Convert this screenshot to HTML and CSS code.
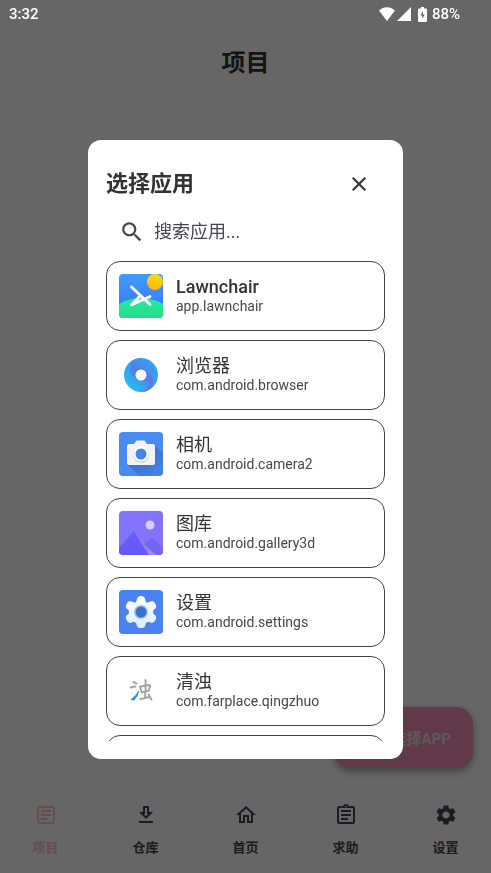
FILE: index.html
```html
<!DOCTYPE html>
<html lang="zh-CN">
<head>
<meta charset="utf-8">
<meta name="viewport" content="width=device-width, initial-scale=1">
<title>项目</title>
<link rel="stylesheet" href="styles.css">
</head>
<body>
<div class="page">
  <header class="topbar"><h1>项目</h1></header>
  <main class="content">
    <button class="fab" type="button">选择APP</button>
  </main>
  <nav class="tabs">
    <a class="tab active" href="#projects">
      <svg viewBox="0 0 24 24"><path d="M19 5v14H5V5h14m0-2H5c-1.1 0-2 .9-2 2v14c0 1.1.9 2 2 2h14c1.1 0 2-.9 2-2V5c0-1.1-.9-2-2-2zM14 17H7v-2h7v2zm3-4H7v-2h10v2zm0-4H7V7h10v2z"/></svg>
      <span>项目</span>
    </a>
    <a class="tab" href="#store">
      <svg viewBox="0 0 24 24"><path d="M19 9h-4V3H9v6H5l7 7 7-7zm-8 2V5h2v6h1.17L12 13.170 9.830 11H11zm-6 7h14v2H5z"/></svg>
      <span>仓库</span>
    </a>
    <a class="tab" href="#home">
      <svg viewBox="0 0 24 24"><path d="M12 5.690l5 4.500V18h-2v-6H9v6H7v-7.810l5-4.500M12 3L2 12h3v8h6v-6h2v6h6v-8h3L12 3z"/></svg>
      <span>首页</span>
    </a>
    <a class="tab" href="#help">
      <svg viewBox="0 0 24 24"><path d="M7 15h7v2H7zm0-4h10v2H7zm0-4h10v2H7zm12-4h-4.180C14.400 1.840 13.300 1 12 1c-1.300 0-2.400.84-2.820 2H5c-1.100 0-2 .9-2 2v14c0 1.100.9 2 2 2h14c1.100 0 2-.9 2-2V5c0-1.100-.9-2-2-2zm-7-.25c.41 0 .75.34.75.75s-.34.75-.75.75-.75-.34-.75-.75.34-.75.75-.75zM19 19H5V5h14v14z"/></svg>
      <span>求助</span>
    </a>
    <a class="tab" href="#settings">
      <svg viewBox="0 0 24 24"><path d="M19.140 12.940c.04-.3.06-.61.06-.94s-.02-.64-.07-.94l2.030-1.580c.18-.14.23-.41.12-.61l-1.920-3.320c-.12-.22-.37-.29-.59-.22l-2.390.96c-.5-.38-1.030-.7-1.620-.94l-.36-2.540c-.04-.24-.24-.41-.48-.41h-3.840c-.24 0-.43.17-.47.41l-.36 2.540c-.59.24-1.130.57-1.620.94l-2.390-.96c-.22-.08-.47 0-.59.22L2.740 8.870c-.12.21-.08.47.12.61l2.030 1.580c-.05.3-.09.63-.09.94s.02.64.07.94l-2.030 1.580c-.18.14-.23.41-.12.61l1.920 3.320c.12.22.37.29.59.22l2.390-.96c.5.38 1.030.7 1.620.94l.36 2.540c.05.24.24.41.48.41h3.840c.24 0 .44-.17.47-.41l.36-2.540c.59-.24 1.130-.56 1.620-.94l2.390.96c.22.08.47 0 .59-.22l1.920-3.320c.12-.22.07-.47-.12-.61l-2.010-1.580zM12 15.600c-1.980 0-3.600-1.620-3.600-3.600s1.620-3.600 3.600-3.600 3.600 1.620 3.600 3.600-1.620 3.600-3.600 3.600z"/></svg>
      <span>设置</span>
    </a>
  </nav>
</div>

<div class="scrim">
  <div class="status">
    <span>3:32</span>
    <div class="status-icons">
      <svg class="wifi" viewBox="0 0 16 14"><path d="M0 3.500C4.500-1 11.500-1 16 3.500L8 14z"/></svg>
      <svg class="signal" viewBox="0 0 14 14"><path d="M14 0v14H0z"/></svg>
      <svg class="battery" viewBox="0 0 9 15"><path fill-rule="evenodd" d="M3 0h3v1.500h2q1 0 1 1V14q0 1-1 1H1q-1 0-1-1V2.500q0-1 1-1h2zM5 4L2.500 8.500h1.700v3.500l2.500-4.500H5z"/></svg>
      <span>88%</span>
    </div>
  </div>

  <section class="dialog" role="dialog" aria-modal="true" aria-labelledby="dialog-title">
    <div class="dialog-head">
      <h2 id="dialog-title">选择应用</h2>
      <button class="close" type="button" aria-label="关闭">
        <svg viewBox="0 0 24 24"><path d="M19 6.410L17.590 5 12 10.590 6.410 5 5 6.410 10.590 12 5 17.590 6.410 19 12 13.410 17.590 19 19 17.590 13.410 12z"/></svg>
      </button>
    </div>
    <label class="search">
      <svg viewBox="0 0 24 24"><path d="M15.500 14h-.79l-.28-.27C15.410 12.590 16 11.110 16 9.500 16 5.910 13.090 3 9.500 3S3 5.910 3 9.500 5.910 16 9.500 16c1.610 0 3.090-.59 4.230-1.570l.27.28v.79l5 4.990L20.490 19l-4.990-5zm-6 0C7.010 14 5 11.990 5 9.500S7.010 5 9.500 5 14 7.010 14 9.500 11.990 14 9.500 14z"/></svg>
      <input type="text" placeholder="搜索应用..." aria-label="搜索应用">
    </label>
    <ul class="apps">
      <li><button class="app" type="button">
        <svg class="app-icon" viewBox="0 0 44 44">
          <defs>
            <linearGradient id="sky" x2="0" y2="1"><stop stop-color="#429bfb"/><stop offset="1" stop-color="#3472fa"/></linearGradient>
            <linearGradient id="lawn" x2="0" y2="1"><stop stop-color="#25e9a4"/><stop offset="1" stop-color="#27d060"/></linearGradient>
            <linearGradient id="sun" x2="0" y2="1"><stop stop-color="#ffdd0c"/><stop offset="1" stop-color="#ffb40b"/></linearGradient>
            <clipPath id="tile"><rect width="44" height="44" rx="4"/></clipPath>
          </defs>
          <g clip-path="url(#tile)">
            <rect width="44" height="44" fill="url(#sky)"/>
            <ellipse cx="22" cy="46" rx="32" ry="22" fill="url(#lawn)"/>
            <circle cx="36" cy="8" r="8" fill="url(#sun)"/>
            <g fill="none" stroke="#fff" stroke-width="2.800" stroke-linecap="round" stroke-linejoin="round"><path d="M12.500 13L31 30.500M21 22L12.500 31L31 22.500"/></g>
          </g>
        </svg>
        <span class="app-text"><span class="name latin">Lawnchair</span><span class="pkg">app.lawnchair</span></span>
      </button></li>
      <li><button class="app" type="button">
        <svg class="app-icon" viewBox="0 0 44 44">
          <defs>
            <linearGradient id="ring" x1="0" y1="1" x2="1" y2="0"><stop stop-color="#22c8fa"/><stop offset=".5" stop-color="#3b97ea"/><stop offset="1" stop-color="#23b9f4"/></linearGradient>
            <linearGradient id="swirl" x2="1" y2="1"><stop stop-color="#4c83e6"/><stop offset="1" stop-color="#6275ea"/></linearGradient>
            <linearGradient id="flow" y1="1" x2="1" y2="0"><stop stop-color="#5f78ea"/><stop offset="1" stop-color="#2fa5f0"/></linearGradient>
          </defs>
          <circle cx="22" cy="22" r="17" fill="url(#ring)"/>
          <path d="M14.500 7C9 14 11 22 16.500 25.500c4 3 9 1 12.500 3.500 2 3-1 8-7 10 6 0 11-3 12-9 1-6-3-10-6-12-4-4-11-2-13.500-11z" fill="url(#swirl)"/>
          <path d="M14.500 7c8-4 17 0 20 7 2 4 0 5-2 6-5-4-8-3-12-4-4-2-6-5-6-9z" fill="url(#flow)"/>
          <circle cx="22" cy="22" r="5.500" fill="#fff"/>
        </svg>
        <span class="app-text"><span class="name">浏览器</span><span class="pkg">com.android.browser</span></span>
      </button></li>
      <li><button class="app" type="button">
        <svg class="app-icon" viewBox="0 0 44 44">
          <defs><linearGradient id="shade" x1=".3" y1=".3" x2="1" y2="1"><stop stop-color="#3565b6"/><stop offset="1" stop-color="#4384e8"/></linearGradient></defs>
          <rect width="44" height="44" rx="4" fill="#4a8af4"/>
          <path d="M35 13l9 8v19q0 4-4 4H20L8 32z" fill="url(#shade)" opacity=".7"/>
          <path d="M10 12h5l2.500-3.500h8L28 12h6q2 0 2 2v17q0 2-2 2H10q-2 0-2-2V14q0-2 2-2z" fill="#f3f3f3"/>
          <circle cx="22" cy="23" r="8" fill="#d8d8d8"/><circle cx="22" cy="22" r="7.500" fill="#fff"/><circle cx="22" cy="22" r="5.500" fill="#4384ee"/>
        </svg>
        <span class="app-text"><span class="name">相机</span><span class="pkg">com.android.camera2</span></span>
      </button></li>
      <li><button class="app" type="button">
        <svg class="app-icon" viewBox="0 0 44 44">
          <defs>
            <linearGradient id="hill" x2="0" y2="1"><stop stop-color="#6b5cfb"/><stop offset="1" stop-color="#6359fc"/></linearGradient>
            <linearGradient id="ray" x2="1" y2="1"><stop stop-color="#9a78d0"/><stop offset="1" stop-color="#9c86f6"/></linearGradient>
          </defs>
          <rect width="44" height="44" rx="4" fill="#8373fb"/>
          <path d="M20 38l12.500-11.500L44 37v3q0 4-4 4H28z" fill="#7464f2"/>
          <path d="M15 20L0 37v3q0 4 4 4h26z" fill="url(#hill)"/>
          <path d="M15 20l11 14 11 10H30z" fill="url(#ray)"/>
          <circle cx="31" cy="14" r="4.500" fill="#d9ccfa"/>
        </svg>
        <span class="app-text"><span class="name">图库</span><span class="pkg">com.android.gallery3d</span></span>
      </button></li>
      <li><button class="app" type="button">
        <svg class="app-icon" viewBox="0 0 44 44">
          <defs><linearGradient id="gear" x2="0" y2="1"><stop stop-color="#fff"/><stop offset="1" stop-color="#d9eefd"/></linearGradient></defs>
          <rect width="44" height="44" rx="4" fill="#4b82f2"/>
          <path d="M18 9q.5-3 4-3t4 3l1 3q1 1 3 0l3-1q2 0 3.500 3t0 4.500L34.500 20q-1 2 0 4l2 1.500q1.500 1.500 0 4.500T33 33l-3-1q-2-.5-3 1l-1 3q-.5 2-4 2t-4-2l-1-3q-1-1.500-3-1l-3 1q-2 0-3.500-3t0-4.500l2-1.500q1-2 0-4l-2-1.500Q6 17 7.500 14t3.500-3l3 1q2 1 3 0z" fill="url(#gear)"/>
          <circle cx="22" cy="22" r="7" fill="#9fc3f2"/><circle cx="22" cy="22" r="5.500" fill="#3d70c8"/>
        </svg>
        <span class="app-text"><span class="name">设置</span><span class="pkg">com.android.settings</span></span>
      </button></li>
      <li><button class="app" type="button">
        <svg class="app-icon brush" viewBox="0 0 44 44">
          <path d="M14.500 13l3 1.500M11.500 18.500l5-1M21 17.500l1.500 5.500M21.500 17.500l8.500-1.500q1.500 0 1 1.500L29.500 22l-7 1.500M26.500 11q.5 9-.5 17.500M21.500 30l9-2M29.500 25.500l3 5"/>
          <path d="M19.500 22.500q-1 5-4.500 8.500l-3-.5q5-3 7.500-8z" fill="#1f93ef" stroke="#1f93ef" stroke-width="1"/>
        </svg>
        <span class="app-text"><span class="name">清浊</span><span class="pkg">com.farplace.qingzhuo</span></span>
      </button></li>
      <li><button class="app" type="button" aria-label="应用"></button></li>
    </ul>
  </section>
</div>
</body>
</html>
```
FILE: styles.css
```css
* { box-sizing: border-box; }

body {
  margin: 0;
  background: #fff;
  color: #333;
  font-family: Roboto, "Noto Sans CJK SC", sans-serif;
}

h1, h2, ul { margin: 0; padding: 0; }

button, input { font: inherit; color: inherit; }

svg { display: block; flex: none; fill: currentColor; }

.page {
  min-height: 100vh;
  display: flex;
  flex-direction: column;
}

.topbar {
  padding-top: 45px;
  text-align: center;
}

.topbar h1 {
  font-size: 24px;
  line-height: 36px;
  font-weight: 700;
}

.content {
  flex: 1;
  display: flex;
  align-items: flex-end;
  justify-content: flex-end;
  padding: 0 18px 11px;
}

.fab {
  width: 139px;
  height: 61px;
  padding: 0 22px;
  border: 0;
  border-radius: 17px;
  background: #f38fb4;
  color: #e6e0e0;
  box-shadow: 0 3px 8px rgba(0, 0, 0, 0.4);
  font-size: 15px;
  font-weight: 700;
  text-align: right;
}

.tabs {
  height: 94px;
  display: grid;
  grid-template-columns: repeat(5, 1fr);
  column-gap: 9px;
}

.tab {
  display: flex;
  flex-direction: column;
  align-items: center;
  gap: 12px;
  padding-top: 24px;
  color: #474552;
  font-size: 13px;
  line-height: 18px;
  font-weight: 700;
  text-decoration: none;
}

.tab svg { width: 24px; height: 24px; }

.tab.active { color: #fcc0cc; }

.scrim {
  position: fixed;
  inset: 0;
  display: flex;
  flex-direction: column;
  padding: 0 88px 114px;
  background: rgba(0, 0, 0, 0.6);
}

.status {
  display: flex;
  justify-content: space-between;
  align-items: center;
  height: 28px;
  margin: 0 -57px 112px -79px;
  color: #fff;
  font-size: 15px;
  font-weight: 500;
}

.status-icons {
  display: flex;
  align-items: center;
  gap: 2px;
}

.wifi { width: 16px; height: 14px; }
.signal { width: 14px; height: 14px; }
.battery { width: 9px; height: 15px; margin: 0 3px 0 5px; }

.dialog {
  flex: 1;
  min-height: 0;
  display: flex;
  flex-direction: column;
  padding: 18px;
  border-radius: 13px;
  background: #fff;
}

.dialog-head {
  display: flex;
  align-items: center;
  justify-content: space-between;
  height: 52px;
}

.dialog-head h2 {
  font-size: 22px;
  line-height: 32px;
  font-weight: 700;
}

.close {
  display: grid;
  place-items: center;
  width: 52px;
  height: 52px;
  padding: 0;
  border: 0;
  background: none;
}

.close svg { width: 24px; height: 24px; }

.search {
  display: flex;
  align-items: center;
  gap: 9px;
  height: 43px;
  padding-left: 13px;
  color: #49454f;
}

.search svg { width: 26px; height: 26px; }

.search input {
  flex: 1;
  min-width: 0;
  padding: 0;
  border: 0;
  outline: 0;
  background: none;
  font-size: 18px;
}

.search input::placeholder { color: #49454f; opacity: 1; }

.apps {
  flex: 1;
  min-height: 0;
  margin-top: 8px;
  display: flex;
  flex-direction: column;
  gap: 9px;
  overflow: hidden;
  list-style: none;
}

.app {
  display: flex;
  align-items: center;
  gap: 13px;
  width: 100%;
  height: 70px;
  padding: 0 12px;
  border: 1px solid #444;
  border-radius: 14px;
  background: #fff;
  text-align: left;
}

.app-icon { width: 44px; height: 44px; }

.brush {
  fill: none;
  stroke: #a5a5a5;
  stroke-width: 2;
  stroke-linecap: round;
}

.app-text { display: flex; flex-direction: column; }

.name {
  font-size: 18px;
  line-height: 20px;
}

.name.latin { font-weight: 500; }

.pkg {
  color: #49454f;
  font-size: 14px;
  line-height: 18px;
}
```
